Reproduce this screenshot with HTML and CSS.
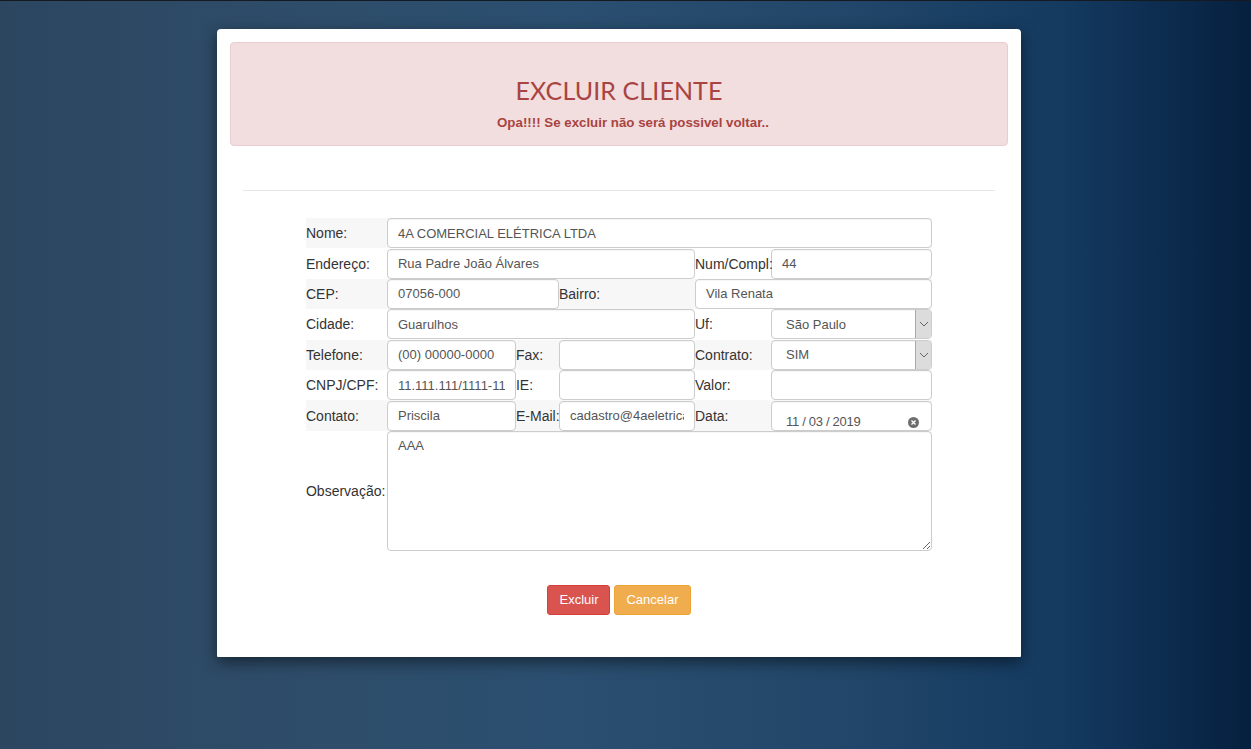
FILE: index.html
```html
<!DOCTYPE html>
<html lang="pt-BR">
<head>
<meta charset="utf-8">
<title>Excluir Cliente</title>
<link rel="stylesheet" href="styles.css">
</head>
<body>
<div class="card">
  <div class="alert">
    <h2 class="alert-title">EXCLUIR CLIENTE</h2>
    <p class="alert-text">Opa!!!! Se excluir não será possivel voltar..</p>
  </div>
  <div class="content">
    <hr class="divider">
    <form class="form">
      <table class="grid">
        <colgroup>
          <col class="c1"><col class="c2"><col class="c3"><col class="c4"><col class="c5"><col class="c6">
        </colgroup>
        <tr class="odd">
          <td class="lbl">Nome:</td>
          <td colspan="5"><input class="field" type="text" value="4A COMERCIAL ELÉTRICA LTDA"></td>
        </tr>
        <tr>
          <td class="lbl">Endereço:</td>
          <td colspan="3"><input class="field" type="text" value="Rua Padre João Álvares"></td>
          <td class="lbl">Num/Compl:</td>
          <td><input class="field" type="text" value="44"></td>
        </tr>
        <tr class="odd">
          <td class="lbl">CEP:</td>
          <td colspan="2"><input class="field" type="text" value="07056-000"></td>
          <td class="lbl">Bairro:</td>
          <td colspan="2"><input class="field" type="text" value="Vila Renata"></td>
        </tr>
        <tr>
          <td class="lbl">Cidade:</td>
          <td colspan="3"><input class="field" type="text" value="Guarulhos"></td>
          <td class="lbl">Uf:</td>
          <td><div class="select"><select class="field sel"><option>São Paulo</option></select><span class="arrow"><svg width="10" height="6" viewBox="0 0 10 6"><path d="M1 1 L5 5 L9 1" fill="none" stroke="#666" stroke-width="1"/></svg></span></div></td>
        </tr>
        <tr class="odd">
          <td class="lbl">Telefone:</td>
          <td><input class="field" type="text" value="(00) 00000-0000"></td>
          <td class="lbl">Fax:</td>
          <td><input class="field" type="text" value=""></td>
          <td class="lbl">Contrato:</td>
          <td><div class="select"><select class="field sel"><option>SIM</option></select><span class="arrow"><svg width="10" height="6" viewBox="0 0 10 6"><path d="M1 1 L5 5 L9 1" fill="none" stroke="#666" stroke-width="1"/></svg></span></div></td>
        </tr>
        <tr>
          <td class="lbl">CNPJ/CPF:</td>
          <td><input class="field" type="text" value="11.111.111/1111-11"></td>
          <td class="lbl">IE:</td>
          <td><input class="field" type="text" value=""></td>
          <td class="lbl">Valor:</td>
          <td><input class="field" type="text" value=""></td>
        </tr>
        <tr class="odd">
          <td class="lbl">Contato:</td>
          <td><input class="field" type="text" value="Priscila"></td>
          <td class="lbl">E-Mail:</td>
          <td><input class="field" type="text" value="cadastro@4aeletrica.com.br"></td>
          <td class="lbl">Data:</td>
          <td><div class="datebox"><input class="field date" type="text" value="11 / 03 / 2019"><span class="clear"><svg width="11" height="11" viewBox="0 0 11 11"><circle cx="5.5" cy="5.5" r="5.5" fill="#6e6e6e"/><path d="M3.5 3.5 L7.5 7.5 M7.5 3.5 L3.5 7.5" stroke="#fff" stroke-width="1.4"/></svg></span></div></td>
        </tr>
        <tr class="obs">
          <td class="lbl">Observação:</td>
          <td colspan="5"><textarea class="field area">AAA</textarea></td>
        </tr>
      </table>
      <div class="actions">
        <button type="button" class="btn btn-danger">Excluir</button>
        <button type="button" class="btn btn-warning">Cancelar</button>
      </div>
    </form>
  </div>
</div>
</body>
</html>
```

FILE: styles.css
```css
* { box-sizing: border-box; }

html, body { height: 100%; }

body {
  margin: 0;
  border-top: 1px solid #151a20;
  font-family: "Liberation Sans", Arial, sans-serif;
  font-size: 14px;
  color: #333;
  background: linear-gradient(to right, #2c4660 0%, #2e4d6a 25%, #2b4f70 45%, #214669 68%, #143a60 85%, #06203f 100%);
  padding: 28px 13px 0 0;
}

.card {
  width: 804px;
  margin: 0 auto;
  background: #fff;
  border-radius: 4px 4px 1px 1px;
  box-shadow: 0 5px 15px rgba(0, 0, 0, 0.5);
  padding: 13px 13px 42px;
}

.alert {
  background: #f2dede;
  border: 1px solid #ebccd1;
  border-radius: 4px;
  color: #a94442;
  height: 104px;
  text-align: center;
  padding-top: 32px;
}

.alert-title {
  margin: 0;
  font-family: "Lato", "Open Sans", sans-serif;
  font-weight: 400;
  font-size: 25px;
  line-height: 30px;
  letter-spacing: 0.1px;
}

.alert-text {
  margin: 10px 0 0 28px;
  font-weight: bold;
  font-size: 13.3px;
  line-height: 16px;
}

.content {
  padding: 0 13px;
}

.divider {
  border: 0;
  border-top: 1px solid #e6e6e6;
  margin: 44px 0 27px;
}

.grid {
  border-collapse: collapse;
  border-spacing: 0;
  table-layout: fixed;
  width: 626px;
  margin: 0 auto;
}

.c1 { width: 81px; }
.c2 { width: 129px; }
.c3 { width: 43px; }
.c4 { width: 136px; }
.c5 { width: 76px; }
.c6 { width: 161px; }

.grid td {
  padding: 0;
  height: 30.4px;
  vertical-align: middle;
}

.grid tr.odd { background: #f7f7f7; }

.lbl {
  color: #333;
  white-space: nowrap;
  font-size: 14px;
}

.field {
  display: block;
  width: 100%;
  height: 30px;
  margin: 0;
  border: 1px solid #ccc;
  border-radius: 4px;
  background: #fff;
  color: #555;
  font-family: "Liberation Sans", Arial, sans-serif;
  font-size: 13px;
  padding: 0 10px;
  box-shadow: inset 0 1px 1px rgba(0, 0, 0, 0.04);
}

.select { position: relative; }

.sel {
  -webkit-appearance: none;
  appearance: none;
  padding-left: 14px;
}

.arrow {
  position: absolute;
  right: 1px;
  top: 1px;
  bottom: 1px;
  width: 16px;
  background: #dcdcdc;
  border-left: 1px solid #a9a9a9;
  display: flex;
  align-items: center;
  justify-content: center;
}

.datebox { position: relative; }

.date {
  padding: 11px 0 0 14px;
  letter-spacing: -0.3px;
}

.clear {
  position: absolute;
  right: 13px;
  top: 16px;
  line-height: 0;
}

.obs td { height: 120px; }

.area {
  height: 120px;
  resize: vertical;
  padding: 6px 10px;
  line-height: 16px;
}

.actions {
  text-align: center;
  margin-top: 34px;
  font-size: 0;
}

.btn {
  display: inline-block;
  height: 30px;
  padding: 0 11px;
  margin: 0 2px;
  border: 1px solid transparent;
  border-radius: 3px;
  color: #fff;
  font-family: "Liberation Sans", Arial, sans-serif;
  font-size: 13px;
  cursor: pointer;
}

.btn-danger {
  background: #d9534f;
  border-color: #d43f3a;
}

.btn-warning {
  background: #f0ad4e;
  border-color: #eea236;
}
```
